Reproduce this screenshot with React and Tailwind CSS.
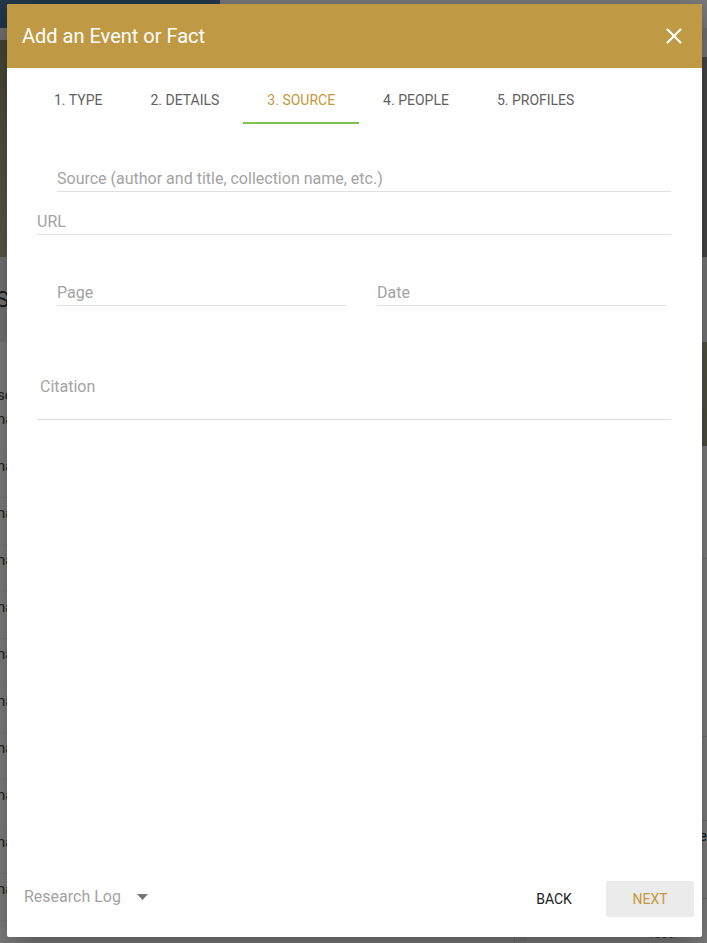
import { X } from "lucide-react";

const tabs = ["1. TYPE", "2. DETAILS", "3. SOURCE", "4. PEOPLE", "5. PROFILES"];

function BackgroundPage() {
  const leftRows = Array.from({ length: 11 });
  return (
    <div className="flex flex-col h-full bg-white">
      {/* top bar */}
      <div className="flex h-[30px]">
        <div className="w-[220px] bg-[#46709a]" />
        <div className="flex-1 bg-[#f2f2f2]" />
      </div>
      <div className="h-[13px] bg-[#e4e4e4]" />

      <div className="flex flex-1">
        {/* left column */}
        <div className="w-[557px] flex flex-col border-r border-[#dddddd]">
          <div className="h-[217px] bg-gradient-to-b from-[#8a8a70] via-[#a4a486] to-[#b3b394]" />
          <div className="h-[85px] bg-[#ededed] flex items-center text-[22px] text-[#333]">
            <span className="ml-[-4px]">Sources</span>
          </div>
          <div className="pt-[44px] text-[15px] text-[#444]">
            <div className="leading-[18px] ml-[-3px]">sources</div>
            {leftRows.map((_, i) => (
              <div key={i} className="h-[47px] leading-[18px] pt-[6px] ml-[-3px] border-b border-[#f0f0f0]">
                name
              </div>
            ))}
          </div>
        </div>
        <div className="w-[13px] bg-[#f6f6f6]" />
        {/* right column */}
        <div className="flex-1 flex flex-col">
          <div className="h-[17px] bg-[#f0f0f0]" />
          <div className="h-[200px] bg-[#8e8e8e]" />
          <div className="h-[85px] bg-[#f0f0f0]" />
          <div className="h-[104px] bg-gradient-to-b from-[#a7a78a] to-[#9c9c80]" />
          <div className="pl-[120px] text-[#333]">
            <div className="pt-[74px] text-[20px] leading-[24px]">Log</div>
            <div className="mt-[14px] border-t border-[#ddd] pt-[6px] text-[15px] text-[#3a5f86]">Family</div>
            <div className="text-[12px] text-[#777]">1900</div>
            <div className="mt-[130px] border-t border-[#ddd] pt-[6px] text-[13px]">Birth</div>
            <div className="text-[12px] text-[#777]">1850</div>
            <div className="text-[12px] text-[#777]">lane</div>
            <div className="mt-[22px] border-t border-[#ddd] pt-[4px] text-[15px]">Marriage</div>
            <div className="text-[12px] text-[#777]">1880</div>
            <div className="text-[12px] text-[#777]">land</div>
            <div className="mt-[14px] border-t border-[#ddd] pt-[4px] text-[15px]">Lived</div>
            <div className="text-[12px] text-[#777]">1855</div>
          </div>
        </div>
      </div>
    </div>
  );
}

export default function App() {
  return (
    <div className="relative w-full h-[943px] overflow-hidden font-['Roboto','Liberation_Sans',sans-serif]">
      <BackgroundPage />

      {/* scrim */}
      <div className="absolute inset-0 bg-black/50" />

      {/* dialog */}
      <div className="absolute left-[7px] top-[4px] w-[695px] h-[933px] bg-white rounded-[2px] shadow-[0_10px_30px_rgba(0,0,0,0.35)] flex flex-col overflow-hidden">
        {/* header */}
        <div className="h-[64px] bg-[#bf9944] flex items-center justify-between pl-[15px] pr-[15px]">
          <h2 className="text-[20px] text-white font-normal leading-none">Add an Event or Fact</h2>
          <button className="text-white">
            <X size={26} strokeWidth={1.9} />
          </button>
        </div>

        {/* tabs */}
        <div className="flex h-[56px] pl-[23px]">
          {tabs.map((t, i) => (
            <div
              key={t}
              className={
                i === 2
                  ? "px-[24px] pt-[24px] text-[14px] leading-[16px] text-[#c4983c] border-b-2 border-[#7cc24a]"
                  : "px-[24px] pt-[24px] text-[14px] leading-[16px] text-[#616161] border-b-2 border-transparent"
              }
            >
              {t}
            </div>
          ))}
        </div>

        {/* form */}
        <div className="flex-1 pl-[30px] pr-[31px] text-[16px] leading-[18px] text-[#a3a3a3]">
          <div className="mt-[46px] ml-[20px] pb-[3px] border-b border-[#e0e0e0]">
            Source (author and title, collection name, etc.)
          </div>
          <div className="mt-[21px] pb-[3px] border-b border-[#e0e0e0]">URL</div>
          <div className="mt-[49px] flex">
            <div className="ml-[20px] w-[289px] pb-[3px] border-b border-[#e0e0e0]">Page</div>
            <div className="ml-[31px] w-[289px] pb-[3px] border-b border-[#e0e0e0]">Date</div>
          </div>
          <div className="mt-[72px] pb-[23px] border-b border-[#e0e0e0]">
            <span className="ml-[3px]">Citation</span>
          </div>
        </div>

        {/* footer */}
        <div className="flex items-center pl-[17px] pr-[8px] pb-[20px]">
          <div className="flex items-center gap-[16px] -mt-[4px] text-[16px] text-[#a3a3a3]">
            <span>Research Log</span>
            <svg width="11" height="6" viewBox="0 0 11 6">
              <path d="M0 0 L11 0 L5.5 6 Z" fill="#757575" />
            </svg>
          </div>
          <div className="flex-1" />
          <button className="w-[88px] h-[36px] text-[14px] text-[#212121] rounded-[2px]">BACK</button>
          <button className="ml-[8px] w-[88px] h-[36px] text-[14px] text-[#c4983c] bg-[#ebebeb] rounded-[2px]">NEXT</button>
        </div>
      </div>
    </div>
  );
}
